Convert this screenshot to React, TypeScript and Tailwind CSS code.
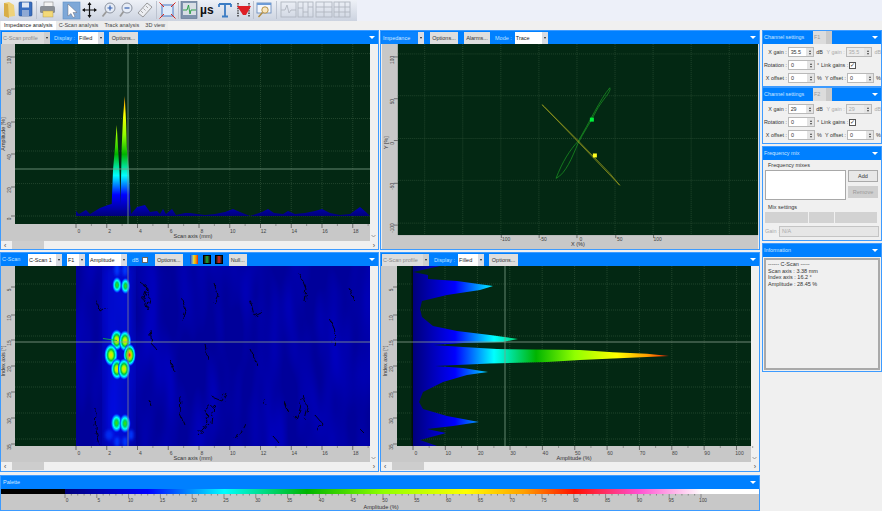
import React from "react";

const FONT = { fontFamily: '"Liberation Sans", Arial, sans-serif' };

// amplitude palette, same stops are used for the plots and the bottom bar
const STOPS: [number, string][] = [
  [0, "#00007a"],
  [13, "#0000ff"],
  [25, "#00ffff"],
  [38, "#00b400"],
  [50, "#90ff00"],
  [63, "#ffff00"],
  [72, "#ffa000"],
  [80, "#ff1000"],
  [90, "#ff50d0"],
  [100, "#ffffff"],
];

const NOISE: [number, number][] = [
  [76, 211], [79, 214], [86, 210], [90, 214], [95, 211], [100, 208], [108, 205], [111.7, 204],
  [113, 170], [115, 147], [116.7, 125], [118, 147], [119.5, 172], [120.5, 204], [121.7, 147], [123, 118],
  [124.7, 96], [126, 120], [126.8, 147], [129, 170], [130, 204], [131, 214], [137, 207], [145, 205], [150, 212],
  [157, 211], [160, 214], [163, 209], [166, 214], [172, 209], [176, 215], [185, 213], [190, 213],
  [197, 214], [205, 215], [215, 214], [225, 212], [233, 209], [240, 212], [250, 216], [256, 214],
  [262, 212], [268, 209], [274, 213], [283, 214], [288, 211], [295, 214], [305, 213], [315, 211],
  [322, 209], [330, 213], [340, 215], [350, 214], [360, 207], [366, 212], [369, 215],
];

const PROFILE: [number, number][] = [
  [440, 267], [413, 273], [428, 276], [428, 280], [457, 282], [493, 287], [480, 291], [447, 296],
  [422, 302], [420, 310], [422, 318], [433, 327], [457, 332], [490, 336], [518, 340], [503, 343],
  [463, 344], [433, 346], [463, 348], [497, 350], [580, 351], [613, 353.3], [647, 354.7], [669, 357], [647, 358],
  [613, 359.5], [580, 361], [547, 363], [490, 364.5], [435, 367], [463, 369], [488, 373], [467, 376], [443, 383], [423, 393],
  [419, 403], [423, 410], [447, 417], [479, 423], [453, 427], [427, 430], [446, 434], [420, 441],
  [437, 447],
];

const BLOBS: [number, number, number, number, string][] = [
  [117, 286, 5, 8.5, "blobGreen"],
  [125.5, 287, 5, 8.5, "blobGreen"],
  [116.7, 341, 6.5, 11, "blobYellow"],
  [125, 342, 6.5, 11, "blobYellow"],
  [111, 356, 7, 11.5, "blobYellow"],
  [129.5, 356, 6.5, 11.5, "blobRed"],
  [117, 370, 6.5, 11, "blobYellow"],
  [124, 370, 6.5, 11, "blobYellow"],
  [116.5, 424, 6, 10, "blobGreen"],
  [125, 424.5, 6, 10, "blobGreen"],
];

const CRACKS = [
  "M140,283 L146,288 L143,298 L147,310 L150,300 L146,286",
  "M96,300 L100,312 L106,308",
  "M150,330 L152,345 L158,352",
  "M150,402 L152,408",
  "M181,398 L180,415 L184,425",
  "M198,436 L208,424 L206,412 L214,405 L212,425",
  "M212,398 L222,402 L226,394",
  "M246,425 L240,436 L232,440",
  "M264,400 L265,406",
  "M272,436 L280,445",
  "M296,420 L300,410 L303,396 L307,408 L304,420",
  "M316,417 L322,424 L318,432",
  "M284,402 L288,412 L286,405",
  "M360,430 L366,436",
  "M96,410 L95,430 L99,446",
  "M182,300 L186,312 L183,322",
  "M214,284 L218,296 L214,304",
  "M250,300 L254,316 L262,312",
  "M300,275 L306,290 L304,302",
  "M330,320 L336,334 L334,346",
  "M250,350 L258,368",
  "M205,345 L208,360",
  "M350,290 L354,302",
  "M170,360 L174,372",
];

function points(p: [number, number][]) {
  return p.map(([x, y]) => `${x},${y}`).join(" ");
}

function range(from: number, to: number, step: number) {
  const out: number[] = [];
  for (let v = from; v <= to + 0.01; v += step) out.push(v);
  return out;
}

function AmpGradient({ id, x0, x1, y0, y1, span }: { id: string; x0: number; x1: number; y0: number; y1: number; span: number }) {
  return (
    <linearGradient id={id} gradientUnits="userSpaceOnUse" x1={x0} x2={x1} y1={y0} y2={y1}>
      {STOPS.filter((s) => s[0] <= span).map(([a, c]) => (
        <stop key={a} offset={a / span} stopColor={c} />
      ))}
    </linearGradient>
  );
}

function Grid({ xs, ys, x0, x1, y0, y1 }: { xs: number[]; ys: number[]; x0: number; x1: number; y0: number; y1: number }) {
  return (
    <g stroke="#2f5238" strokeWidth="0.7" strokeDasharray="1 1">
      {xs.map((x) => <line key={x} x1={x} x2={x} y1={y0} y2={y1} />)}
      {ys.map((y) => <line key={y} x1={x0} x2={x1} y1={y} y2={y} />)}
    </g>
  );
}

function XAxis({ start, step, minor, labels, y, title, titleX, titleY }: { start: number; step: number; minor?: boolean; labels: string[]; y: number; title: string; titleX: number; titleY: number }) {
  return (
    <g>
      {labels.map((l, i) => (
        <g key={l}>
          <line x1={start + i * step} x2={start + i * step} y1={y} y2={y + 4} stroke="#333" strokeWidth="0.6" />
          {minor && <line x1={start + (i + 0.5) * step} x2={start + (i + 0.5) * step} y1={y} y2={y + 2} stroke="#555" strokeWidth="0.5" />}
          <text x={start + i * step + 3} y={y + 8.5} fontSize="5" fill="#444" textAnchor="middle">{l}</text>
        </g>
      ))}
      <text x={titleX} y={titleY} fontSize="5.6" fill="#333" textAnchor="middle">{title}</text>
    </g>
  );
}

function YAxis({ x, ys, labels, title, titleY }: { x: number; ys: number[]; labels: string[]; title: string; titleY: number }) {
  return (
    <g>
      {ys.map((y, i) => (
        <g key={y}>
          <line x1={x - 4} x2={x} y1={y} y2={y} stroke="#333" strokeWidth="0.6" />
          <text transform={`translate(${x - 4},${y + 3}) rotate(-90)`} fontSize="4.8" fill="#444" textAnchor="middle">{labels[i]}</text>
        </g>
      ))}
      <text transform={`translate(${x - 10},${titleY}) rotate(-90)`} fontSize="5.4" fill="#333" textAnchor="middle">{title}</text>
    </g>
  );
}

function Chevron({ x, y }: { x: number; y: number }) {
  return <path d={`M${x - 2},${y - 1} L${x},${y + 1} L${x + 2},${y - 1}`} fill="none" stroke="#777" strokeWidth="0.7" />;
}

function Scrollbar({ className = "" }: { className?: string }) {
  return (
    <div className={`flex h-[8px] items-center bg-[#f0f0f0] text-[7px] leading-none text-[#444] ${className}`}>
      <span className="w-[11px] pl-[3px]">‹</span>
      <div className="h-[8px] w-[32px] bg-[#cdcdcd]" />
      <span className="ml-auto pr-[3px]">›</span>
    </div>
  );
}

function Sel({ w, children, tone = "white" }: { w: string; children?: React.ReactNode; tone?: "white" | "off" | "blue" }) {
  const bg = tone === "white" ? "bg-white text-[#222]" : tone === "off" ? "bg-[#dcdcdc] text-[#8a8a8a]" : "bg-[#0a84ff] text-[#cfe6ff]";
  return (
    <div className="flex h-[12px] items-stretch">
      <div className={`${w} ${bg} overflow-hidden whitespace-nowrap pl-[1px] text-[5.5px] leading-[12px]`}>{children}</div>
      <div className={`flex w-[6px] items-center justify-center ${tone === "off" ? "bg-[#cfcfcf]" : "bg-[#d9dce3]"}`}>
        <span className="h-0 w-0 border-x-[1.5px] border-t-[2px] border-x-transparent border-t-[#222]" />
      </div>
    </div>
  );
}

function Btn({ w, children }: { w: string; children: React.ReactNode }) {
  return <div className={`${w} h-[12px] whitespace-nowrap bg-[#dedede] text-center text-[5.5px] leading-[12px] text-[#333]`}>{children}</div>;
}

function HLabel({ children }: { children: React.ReactNode }) {
  return <div className="whitespace-nowrap text-[5.5px] leading-[12px] text-[#bfe0ff]">{children}</div>;
}

function Panel({ head, className = "", children }: { head: React.ReactNode; className?: string; children: React.ReactNode }) {
  return (
    <div className={`flex flex-col overflow-hidden border border-[#3d9bff] bg-[#f0f0f0] ${className}`}>
      <div className="relative flex h-[13px] shrink-0 items-center bg-[#0080ff]">
        {head}
        <span className="absolute right-[3px] top-[5px] h-0 w-0 border-x-[3px] border-t-[3px] border-x-transparent border-t-white" />
      </div>
      {children}
    </div>
  );
}

function SideHead({ children }: { children: React.ReactNode }) {
  return <span className="whitespace-nowrap pl-[1px] text-[5.4px] text-[#cfe6ff]">{children}</span>;
}

function Spin({ w, value, off }: { w: string; value: string; off?: boolean }) {
  return (
    <div className={`flex h-[10px] ${w} border border-[#b9b9b9] ${off ? "bg-[#ececec] text-[#aaa]" : "bg-white text-[#333]"}`}>
      <span className="flex-1 pl-[2px] text-[5.4px] leading-[8px]">{value}</span>
      <span className="flex w-[7px] flex-col items-center justify-center gap-[1px] bg-[#e4e4e4]">
        <i className="h-0 w-0 border-x-[1.5px] border-b-[2px] border-x-transparent border-b-[#444]" />
        <i className="h-0 w-0 border-x-[1.5px] border-t-[2px] border-x-transparent border-t-[#444]" />
      </span>
    </div>
  );
}

function ChannelSettings({ name, x, y }: { name: string; x: string; y: string }) {
  return (
    <Panel
      className="h-[57px]"
      head={
        <>
          <SideHead>Channel settings</SideHead>
          <div className="absolute left-[50px] top-0 flex h-[13px]">
            <span className="w-[13px] bg-[#dcdcdc] pl-[1px] text-[5.4px] leading-[13px] text-[#999]">{name}</span>
            <span className="w-[6px] bg-[#c9c9c9]" />
          </div>
        </>
      }
    >
      <div className="flex flex-col gap-[3px] whitespace-nowrap pt-[3px] text-[5.4px] text-[#333]">
        <div className="flex h-[10px] items-center">
          <span className="w-[24px] text-right">X gain :</span>
          <Spin w="w-[27px] ml-[1px]" value={x} />
          <span className="ml-[2px] w-[10px]">dB</span>
          <span className="w-[19px] text-right text-[#aaa]">Y gain :</span>
          <Spin w="w-[27px] ml-[1px]" value={y} off />
          <span className="ml-[2px] text-[#aaa]">dB</span>
        </div>
        <div className="flex h-[10px] items-center">
          <span className="w-[24px] text-right">Rotation :</span>
          <Spin w="w-[27px] ml-[1px]" value="0" />
          <span className="ml-[2px] w-[4px]">°</span>
          <span className="w-[27px] text-right">Link gains :</span>
          <span className="ml-[1px] flex h-[7px] w-[7px] items-center justify-center border border-[#555] bg-white text-[6px] leading-none">✓</span>
        </div>
        <div className="flex h-[10px] items-center">
          <span className="w-[24px] text-right">X offset :</span>
          <Spin w="w-[27px] ml-[1px]" value="0" />
          <span className="ml-[2px] w-[6px]">%</span>
          <span className="w-[23px] text-right">Y offset :</span>
          <Spin w="w-[27px] ml-[1px]" value="0" />
          <span className="ml-[2px]">%</span>
        </div>
      </div>
    </Panel>
  );
}

function ToolIcons() {
  return (
    <div className="flex h-[21px] w-[357px] items-center bg-gradient-to-b from-[#eef1f7] to-[#ccd3e0]">
      <svg width="357" height="21" viewBox="0 0 357 21" className="block">
        {/* folder */}
        <path d="M4 3 L9 2 L14 5 L15 16 L8 17 L4 16 Z" fill="#efd27a" />
        <path d="M4 3 L8 4 L9 18 L4 16 Z" fill="#d8ae48" />
        {/* floppy */}
        <rect x="19" y="2" width="13" height="14" rx="1" fill="#3a6fc0" stroke="#244a8a" strokeWidth="0.6" />
        <rect x="22" y="2.5" width="7" height="5" fill="#dfe7f4" />
        <rect x="22" y="10" width="7" height="6" fill="#8fa9d4" />
        {/* printer */}
        <rect x="44" y="2" width="9" height="5" fill="#f3f3f3" stroke="#777" strokeWidth="0.5" />
        <rect x="40" y="6" width="15" height="7" rx="1.5" fill="#8a8f96" />
        <rect x="43" y="11" width="10" height="6" fill="#f3d978" stroke="#a89040" strokeWidth="0.4" />
        <line x1="36.5" x2="36.5" y1="1" y2="19" stroke="#bcc3d0" />
        {/* pointer, selected */}
        <rect x="63" y="2" width="17" height="17" fill="#7ea8d8" stroke="#5f8fc5" strokeWidth="0.6" />
        <path d="M68 4 L68 16 L71 13.5 L73 17.5 L75 16.5 L73 12.5 L77 12.5 Z" fill="#fff" stroke="#556" strokeWidth="0.4" />
        {/* move */}
        <path d="M89.5 3 V17 M83 10 H96" stroke="#111" strokeWidth="1.2" />
        <path d="M89.5 2 L87.5 5 H91.5 Z M89.5 18 L87.5 15 H91.5 Z M82 10 L85 8 V12 Z M97 10 L94 8 V12 Z" fill="#111" />
        {/* zoom in / out */}
        <circle cx="110" cy="8" r="5" fill="#e6ecf6" stroke="#8d94a0" strokeWidth="1" />
        <path d="M107.5 8 H112.5 M110 5.5 V10.5" stroke="#3560b0" strokeWidth="1.2" />
        <line x1="106.5" y1="11.5" x2="102.5" y2="16.5" stroke="#9a9a9a" strokeWidth="1.8" />
        <circle cx="127" cy="8" r="5" fill="#e6ecf6" stroke="#8d94a0" strokeWidth="1" />
        <path d="M124.5 8 H129.5" stroke="#3560b0" strokeWidth="1.2" />
        <line x1="123.5" y1="11.5" x2="120" y2="16.5" stroke="#9a9a9a" strokeWidth="1.8" />
        {/* ruler */}
        <path d="M147 3 L152 7 L143 17 L138 13 Z" fill="#eceef2" stroke="#777" strokeWidth="0.7" />
        <path d="M146 6 L148 8 M143.5 8.5 L145.5 10.5 M141 11 L143 13" stroke="#777" strokeWidth="0.6" />
        <line x1="156.5" x2="156.5" y1="1" y2="19" stroke="#bcc3d0" />
        {/* fit frame */}
        <rect x="162" y="5" width="11" height="11" fill="#dfeaf8" stroke="#3a6fc0" strokeWidth="0.9" />
        <path d="M159.5 2.5 L164 7 M175.5 2.5 L171 7 M159.5 18.5 L164 14 M175.5 18.5 L171 14" stroke="#d8261c" strokeWidth="1" />
        <line x1="178.5" x2="178.5" y1="1" y2="19" stroke="#bcc3d0" />
        {/* waveform, selected */}
        <rect x="181" y="1.5" width="16" height="17" fill="#7f93ad" stroke="#5b6f8a" strokeWidth="0.6" />
        <rect x="183" y="3" width="13" height="12" fill="#d8dee5" />
        <path d="M183 10 H187 L188.5 5 L190 14 L191 10 H196" stroke="#1e9a3a" strokeWidth="0.9" fill="none" />
        {/* T cursor */}
        <path d="M219 4 H231 M225 4 V16 M222 16.5 H228 M219 4 V7 M231 4 V7" stroke="#3b7cc4" strokeWidth="1.8" fill="none" />
        {/* red gate */}
        <path d="M238 3 V17 M249 3 V17" stroke="#111" strokeWidth="1.2" strokeDasharray="1.4 1" />
        <path d="M237 6 H251 L246 15 H243 Z" fill="#de1f26" />
        <line x1="253.5" x2="253.5" y1="1" y2="19" stroke="#bcc3d0" />
        {/* monitor search */}
        <rect x="257" y="3" width="14" height="10" fill="#f3f6fb" stroke="#6d8fbe" strokeWidth="0.9" />
        <rect x="257" y="3" width="14" height="2" fill="#6d9bd6" />
        <circle cx="265" cy="10" r="3.2" fill="#f8e6bf" stroke="#b08a3c" strokeWidth="0.9" />
        <line x1="262.5" y1="12.5" x2="258.5" y2="17" stroke="#b08a3c" strokeWidth="1.4" />
        <line x1="276.5" x2="276.5" y1="1" y2="19" stroke="#bcc3d0" />
        {/* disabled layout buttons */}
        <g fill="none" stroke="#b0b6c0" strokeWidth="0.9">
          <rect x="281" y="2" width="15" height="15" />
          <path d="M281 10 H285 L287 5 L289 13 L291 10 H296" />
          <rect x="298" y="2" width="15" height="15" />
          <path d="M303 2 V17 M308 2 V17 M298 8 H303 M303 12 H308 M308 7 H313" />
          <rect x="316" y="2" width="16" height="15" />
          <path d="M316 7 H332 M316 12 H332 M324 2 V17" />
          <rect x="334" y="2" width="16" height="15" />
          <path d="M334 7 H350 M334 12 H350 M339 2 V17 M345 2 V17" />
        </g>
        <text x="200" y="14" fontSize="12" fontWeight="700" fill="#111" style={FONT}>µs</text>
      </svg>
    </div>
  );
}

function AmplitudeChart() {
  return (
    <svg width="377" height="197" viewBox="1 44 377 197" className="block" style={FONT}>
      <defs>
        <AmpGradient id="ampV" x0={0} x1={0} y0={216} y1={86} span={80} />
      </defs>
      <rect x="1" y="44" width="377" height="197" fill="#c8c8c8" />
      <rect x="370" y="44" width="8" height="197" fill="#f0f0f0" />
      <Chevron x={373.5} y={236} />
      <rect x="15" y="44" width="355" height="180" fill="#032813" />
      <Grid xs={range(76, 370, 30.75)} ys={[53.6, 86, 118.5, 151, 183.6, 216]} x0={15} x1={370} y0={44} y1={224} />
      <polygon points={`76,216 ${points(NOISE)} 370,216`} fill="url(#ampV)" />
      <line x1="128" x2="128" y1="44" y2="224" stroke="#7f9f88" strokeWidth="0.8" />
      <line x1="15" x2="370" y1="169" y2="169" stroke="#7f9f88" strokeWidth="0.8" />
      <YAxis x={15} ys={[57, 89, 122, 154, 187, 216]} labels={["100", "80", "60", "40", "20", "0"]} title="Amplitude [%]" titleY={134} />
      <XAxis start={76} step={30.75} minor labels={["0", "2", "4", "6", "8", "10", "12", "14", "16", "18"]} y={224} title="Scan axis (mm)" titleX={193} titleY={238} />
    </svg>
  );
}

function ImpedanceChart() {
  return (
    <svg width="378" height="206" viewBox="381 44 378 206" className="block" style={FONT}>
      <rect x="381" y="44" width="378" height="206" fill="#c8c8c8" />
      <rect x="397" y="44" width="362" height="192" fill="#032813" />
      <Grid xs={range(424, 740, 38.25)} ys={[54, 96, 139, 181, 224]} x0={397} x1={759} y0={44} y1={236} />
      <g fill="none" strokeWidth="0.7">
        <path d="M556,179 C562,163 570,150 578,142 C590,122 600,100 610,88 C612,92 602,100 596,112 C590,124 584,132 578,144 C572,158 566,174 556,179 Z" stroke="#1c9a22" />
        <path d="M542,105 L574,138 L620,186 L610,174 L578,141 L544,107 Z" stroke="#a3a31e" />
      </g>
      <rect x="590" y="118" width="4" height="4" fill="#00f03c" />
      <rect x="593" y="154" width="4" height="4" fill="#ffff20" />
      <YAxis x={397} ys={[57, 99, 141, 184, 226]} labels={["100", "50", "0", "-50", "-100"]} title="Y [%]" titleY={143} />
      <text x="578" y="247" fontSize="5.6" fill="#333" textAnchor="middle">X (%)</text>
      {[[501, "-100"], [539, "-50"], [577, "0"], [616, "50"], [654, "100"]].map(([x, l]) => (
        <g key={l}>
          <line x1={x} x2={x} y1="236" y2="239" stroke="#333" strokeWidth="0.6" />
          <text x={Number(x) + 4} y="241.5" fontSize="5" fill="#444" textAnchor="middle">{l}</text>
        </g>
      ))}
    </svg>
  );
}

function CScanChart() {
  const ys = [285, 311, 337, 363, 388, 414, 440];
  return (
    <svg width="377" height="196" viewBox="1 267 377 196" className="block" style={FONT}>
      <defs>
        <radialGradient id="blobGreen">
          <stop offset="0" stopColor="#40e000" />
          <stop offset="0.3" stopColor="#00d060" />
          <stop offset="0.55" stopColor="#00ffff" />
          <stop offset="0.78" stopColor="#0060ff" />
          <stop offset="1" stopColor="#0000ff" stopOpacity="0" />
        </radialGradient>
        <radialGradient id="blobYellow">
          <stop offset="0" stopColor="#ffd000" />
          <stop offset="0.28" stopColor="#a0ff00" />
          <stop offset="0.48" stopColor="#00c040" />
          <stop offset="0.68" stopColor="#00ffff" />
          <stop offset="0.85" stopColor="#0060ff" />
          <stop offset="1" stopColor="#0000ff" stopOpacity="0" />
        </radialGradient>
        <radialGradient id="blobRed">
          <stop offset="0" stopColor="#ff1010" />
          <stop offset="0.22" stopColor="#ffb000" />
          <stop offset="0.4" stopColor="#90f000" />
          <stop offset="0.56" stopColor="#00c040" />
          <stop offset="0.72" stopColor="#00ffff" />
          <stop offset="0.87" stopColor="#0060ff" />
          <stop offset="1" stopColor="#0000ff" stopOpacity="0" />
        </radialGradient>
        <filter id="mottle" x="0" y="0" width="100%" height="100%">
          <feTurbulence type="fractalNoise" baseFrequency="0.05 0.01" numOctaves="2" seed="7" />
          <feColorMatrix values="0 0 0 0 0  0 0 0 0 0  0 0 0 0 1  1.2 0 0 0 -0.45" />
        </filter>
        <filter id="soft"><feGaussianBlur stdDeviation="5" /></filter>
        <filter id="thin" x="-20%" y="-20%" width="140%" height="140%">
          <feTurbulence type="fractalNoise" baseFrequency="0.18" numOctaves="2" seed="3" result="n" />
          <feDisplacementMap in="SourceGraphic" in2="n" scale="7" />
          <feGaussianBlur stdDeviation="0.3" />
        </filter>
        <filter id="halo"><feGaussianBlur stdDeviation="1.5" /></filter>
        <clipPath id="scanClip"><rect x="76" y="267" width="294" height="180" /></clipPath>
      </defs>
      <rect x="1" y="267" width="377" height="196" fill="#c8c8c8" />
      <rect x="370" y="267" width="8" height="196" fill="#f0f0f0" />
      <Chevron x={373.5} y={459} />
      <rect x="15" y="267" width="61" height="180" fill="#032813" />
      <Grid xs={[]} ys={ys} x0={15} x1={76} y0={267} y1={447} />
      <g clipPath="url(#scanClip)">
        <rect x="76" y="267" width="294" height="180" fill="#00009a" />
        <rect x="76" y="267" width="294" height="180" filter="url(#mottle)" opacity="0.7" />
        <rect x="105" y="267" width="28" height="180" fill="#0018ff" opacity="0.5" filter="url(#soft)" />
        <g fill="none" stroke="#00001a" strokeWidth="1" filter="url(#thin)">
          {CRACKS.map((d) => <path key={d} d={d} />)}
        </g>
        <g filter="url(#halo)" fill="#0038ff">
          <ellipse cx="117" cy="270" rx="2.5" ry="7" />
          <ellipse cx="125" cy="270" rx="2.5" ry="7" />
          <ellipse cx="109" cy="436" rx="4" ry="5" opacity="0.7" />
          <ellipse cx="131" cy="436" rx="2.5" ry="5" />
          <ellipse cx="117" cy="443" rx="2.5" ry="5" />
          <ellipse cx="125" cy="443" rx="2.5" ry="5" />
        </g>
        {BLOBS.map(([cx, cy, rx, ry, id]) => (
          <ellipse key={`${cx}-${cy}`} cx={cx} cy={cy} rx={rx} ry={ry} fill={`url(#${id})`} />
        ))}
        <line x1="103" y1="339.5" x2="117" y2="341.5" stroke="#10b040" strokeWidth="0.9" />
      </g>
      <line x1="128" x2="128" y1="267" y2="447" stroke="#80838f" strokeWidth="0.8" />
      <line x1="15" x2="370" y1="343" y2="343" stroke="#8c9e90" strokeWidth="0.8" />
      <YAxis x={15} ys={[288, 316, 341, 367, 393, 419, 445]} labels={["5", "10", "15", "20", "25", "30", "35"]} title="Index axis [°]" titleY={362} />
      <XAxis start={76} step={30.75} minor labels={["0", "2", "4", "6", "8", "10", "12", "14", "16", "18"]} y={447} title="Scan axis (mm)" titleX={193} titleY={461} />
    </svg>
  );
}

function ProfileChart() {
  const xs = range(445, 740, 32.4);
  return (
    <svg width="378" height="196" viewBox="381 267 378 196" className="block" style={FONT}>
      <defs>
        <AmpGradient id="ampH" x0={413} x1={672} y0={0} y1={0} span={80} />
      </defs>
      <rect x="381" y="267" width="378" height="196" fill="#c8c8c8" />
      <rect x="751" y="267" width="8" height="196" fill="#f0f0f0" />
      <Chevron x={754.5} y={459} />
      <rect x="397" y="267" width="354" height="180" fill="#032813" />
      <Grid xs={xs} ys={[285, 311, 337, 363, 388, 414, 440]} x0={397} x1={751} y0={267} y1={447} />
      <rect x="411.5" y="267" width="2" height="180" fill="#00100a" />
      <polygon points={`413,267 ${points(PROFILE)} 413,447`} fill="url(#ampH)" />
      <line x1="505" x2="505" y1="267" y2="447" stroke="#7f9f88" strokeWidth="0.8" />
      <line x1="397" x2="751" y1="343" y2="343" stroke="#8c9e90" strokeWidth="0.8" />
      <YAxis x={397} ys={[288, 316, 341, 367, 393, 419, 445]} labels={["5", "10", "15", "20", "25", "30", "35"]} title="Index axis [°]" titleY={362} />
      <XAxis start={413} step={32.35} minor labels={range(0, 100, 10).map(String)} y={447} title="Amplitude (%)" titleX={574} titleY={461} />
    </svg>
  );
}

function Palette() {
  const css = `linear-gradient(to right, ${STOPS.map(([a, c]) => `${c} ${a}%`).join(", ")})`;
  return (
    <Panel className="h-[36px] w-[760px]" head={<span className="pl-[2px] text-[5.5px] text-[#cfe6ff]">Palette</span>}>
      <div className="relative flex-1 bg-[#c8c8c8]">
        <div className="flex h-[5px]">
          <div className="w-[64px] bg-black" />
          <div className="w-[637px]" style={{ background: css }} />
          <div className="flex-1 bg-white" />
        </div>
        <svg width="758" height="16" viewBox="1 495 758 16" className="block" style={FONT}>
          {range(0, 100, 1).map((a) => {
            const x = 65 + a * 6.36;
            return <line key={a} x1={x} x2={x} y1="495" y2={a % 5 === 0 ? 499 : 496.5} stroke="#444" strokeWidth="0.5" />;
          })}
          {range(0, 100, 5).map((a) => (
            <text key={a} x={65 + a * 6.36 + 2} y="503" fontSize="4.8" fill="#444" textAnchor="middle">{a}</text>
          ))}
          <text x="381" y="510" fontSize="5.6" fill="#333" textAnchor="middle">Amplitude (%)</text>
        </svg>
      </div>
    </Panel>
  );
}

export default function App() {
  return (
    <div className="flex h-[511px] w-[882px] flex-col overflow-hidden bg-[#f0f0f0]" style={FONT}>
      <div className="flex h-[21px] shrink-0 bg-[#edf0f9]">
        <ToolIcons />
      </div>
      <div className="flex h-[9px] shrink-0 items-end whitespace-nowrap bg-[#f0f0f0] text-[5.5px] leading-[9px] text-[#444]">
        <span className="ml-[1px] bg-white px-[3px] text-[#222]">Impedance analysis</span>
        <span className="bg-[#ececec] px-[3px]">C-Scan analysis</span>
        <span className="bg-[#ececec] px-[3px]">Track analysis</span>
        <span className="bg-[#ececec] px-[3px]">3D view</span>
      </div>

      <div className="flex flex-1">
        <div className="flex w-[760px] flex-col">
          <div className="flex gap-[1px]">
            <Panel
              className="h-[220px] w-[379px]"
              head={
                <>
                  <div className="ml-[1px]"><Sel w="w-[42px]" tone="off">C-Scan profile</Sel></div>
                  <div className="ml-[4px]"><HLabel>Display :</HLabel></div>
                  <div className="ml-[3px]"><Sel w="w-[20px]">Filled</Sel></div>
                  <div className="ml-[5px]"><Btn w="w-[29px]">Options...</Btn></div>
                </>
              }
            >
              <AmplitudeChart />
              <Scrollbar />
            </Panel>
            <Panel
              className="h-[220px] w-[380px]"
              head={
                <>
                  <div className="ml-[1px]"><Sel w="w-[36px]" tone="blue">Impedance</Sel></div>
                  <div className="ml-[6px]"><Btn w="w-[28px]">Options...</Btn></div>
                  <div className="ml-[6px]"><Btn w="w-[26px]">Alarms...</Btn></div>
                  <div className="ml-[5px]"><HLabel>Mode :</HLabel></div>
                  <div className="ml-[3px]"><Sel w="w-[27px]">Trace</Sel></div>
                </>
              }
            >
              <ImpedanceChart />
            </Panel>
          </div>

          <div className="mt-[2px] flex gap-[1px]">
            <Panel
              className="h-[220px] w-[379px]"
              head={
                <>
                  <span className="w-[27px] pl-[1px] text-[5.5px] text-[#bfe0ff]">C-Scan</span>
                  <Sel w="w-[28px]">C-Scan 1</Sel>
                  <div className="ml-[5px]"><Sel w="w-[12px]">F1</Sel></div>
                  <div className="ml-[4px]"><Sel w="w-[32px]">Amplitude</Sel></div>
                  <div className="ml-[5px]"><HLabel>dB</HLabel></div>
                  <span className="ml-[3px] h-[6px] w-[6px] border border-[#666] bg-white" />
                  <div className="ml-[7px]"><Btn w="w-[28px]">Options...</Btn></div>
                  <span className="ml-[7px] h-[9px] w-[8px] bg-gradient-to-r from-[#1030e0] via-[#f0e000] to-[#e02010]" />
                  <span className="ml-[5px] h-[9px] w-[8px] border border-black bg-gradient-to-r from-[#111] via-[#10b030] to-[#111]" />
                  <span className="ml-[4px] h-[9px] w-[8px] border border-black bg-gradient-to-r from-[#111] via-[#e02020] to-[#111]" />
                  <div className="ml-[6px]"><Btn w="w-[18px]">Null...</Btn></div>
                </>
              }
            >
              <CScanChart />
              <Scrollbar />
            </Panel>
            <Panel
              className="h-[220px] w-[380px]"
              head={
                <>
                  <div className="ml-[1px]"><Sel w="w-[41px]" tone="off">C-Scan profile</Sel></div>
                  <div className="ml-[5px]"><HLabel>Display :</HLabel></div>
                  <div className="ml-[3px]"><Sel w="w-[20px]">Filled</Sel></div>
                  <div className="ml-[5px]"><Btn w="w-[29px]">Options...</Btn></div>
                </>
              }
            >
              <ProfileChart />
              <Scrollbar />
            </Panel>
          </div>

          <div className="mt-[3px]">
            <Palette />
          </div>
        </div>

        <div className="ml-[2px] flex w-[120px] flex-col">
          <ChannelSettings name="F1" x="35.5" y="35.5" />
          <ChannelSettings name="F2" x="29" y="29" />
          <Panel className="mt-[2px] h-[95px]" head={<SideHead>Frequency mix</SideHead>}>
            <div className="flex flex-col whitespace-nowrap px-[2px] pt-[1px] text-[5.5px] text-[#333]">
              <span className="pl-[3px] leading-[9px]">Frequency mixes</span>
              <div className="flex gap-[2px]">
                <div className="h-[30px] w-[81px] border border-[#a8a8a8] bg-white" />
                <div className="flex flex-col gap-[4px]">
                  <div className="h-[12px] w-[30px] border border-[#aaa] bg-[#e8e8e8] text-center leading-[10px]">Add</div>
                  <div className="h-[12px] w-[30px] bg-[#cfcfcf] text-center leading-[12px] text-[#999]">Remove</div>
                </div>
              </div>
              <span className="mt-[3px] pl-[3px] leading-[9px]">Mix settings</span>
              <div className="flex gap-[1px]">
                <div className="h-[11px] w-[43px] bg-[#d2d2d2]" />
                <div className="h-[11px] w-[25px] bg-[#d2d2d2]" />
                <div className="h-[11px] w-[42px] bg-[#d2d2d2]" />
              </div>
              <div className="mt-[3px] flex h-[11px] items-center text-[#aaa]">
                <span className="w-[14px]">Gain :</span>
                <span className="h-[11px] flex-1 border border-[#c4c4c4] bg-[#e6e6e6] pl-[2px] leading-[9px]">N/A</span>
              </div>
            </div>
          </Panel>
          <Panel className="mt-[2px] h-[129px]" head={<SideHead>Information</SideHead>}>
            <div className="m-[1px] flex-1 border-2 border-[#a9a9a9] bg-[#f0f0f0] px-[1px] pt-[1px] text-[5.5px] leading-[6.7px] text-[#333]">
              <p className="pl-[1px]">------ C-Scan -----</p>
              <p className="pl-[1px]">Scan axis : 3.38 mm</p>
              <p className="pl-[1px]">Index axis : 16.2 °</p>
              <p className="pl-[1px]">Amplitude : 28.45 %</p>
            </div>
          </Panel>
        </div>
      </div>
    </div>
  );
}
